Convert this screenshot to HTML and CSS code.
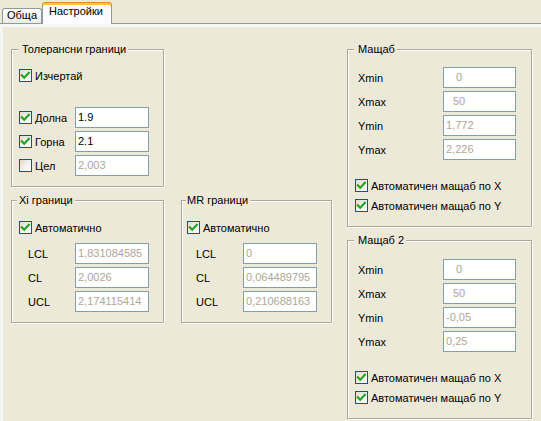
FILE: index.html
```html
<!DOCTYPE html>
<html lang="bg">
<head>
<meta charset="utf-8">
<title>Настройки</title>
<link rel="stylesheet" href="styles.css">
</head>
<body>
<div class="window">
  <div class="tabs">
    <div class="tab">Обща</div>
    <div class="tab tab-active">Настройки</div>
  </div>
  <div class="panel">
    <div class="col-left">
      <div class="group g-tol">
        <span class="group-title t-wide">Толерансни граници</span>
        <div class="row">
          <span class="cb"><svg viewBox="0 0 13 13"><path d="M2.8 6.2 5.2 8.7 9.9 3.8"/></svg></span><span class="cb-text">Изчертай</span>
        </div>
        <div class="row mt21">
          <div class="lead"><span class="cb"><svg viewBox="0 0 13 13"><path d="M2.8 6.2 5.2 8.7 9.9 3.8"/></svg></span><span class="cb-text">Долна</span></div>
          <div class="tb tb-on">1.9</div>
        </div>
        <div class="row">
          <div class="lead"><span class="cb"><svg viewBox="0 0 13 13"><path d="M2.8 6.2 5.2 8.7 9.9 3.8"/></svg></span><span class="cb-text">Горна</span></div>
          <div class="tb tb-on">2.1</div>
        </div>
        <div class="row">
          <div class="lead"><span class="cb"></span><span class="cb-text">Цел</span></div>
          <div class="tb">2,003</div>
        </div>
      </div>
      <div class="group-row">
        <div class="group g-xi">
          <span class="group-title">Xi граници</span>
          <div class="row">
            <span class="cb"><svg viewBox="0 0 13 13"><path d="M2.8 6.2 5.2 8.7 9.9 3.8"/></svg></span><span class="cb-text">Автоматично</span>
          </div>
          <div class="row mt5">
            <div class="lead lead-label">LCL</div>
            <div class="tb">1,831084585</div>
          </div>
          <div class="row">
            <div class="lead lead-label">CL</div>
            <div class="tb">2,0026</div>
          </div>
          <div class="row">
            <div class="lead lead-label">UCL</div>
            <div class="tb">2,174115414</div>
          </div>
        </div>
        <div class="group g-mr">
          <span class="group-title t-mr">MR граници</span>
          <div class="row">
            <span class="cb"><svg viewBox="0 0 13 13"><path d="M2.8 6.2 5.2 8.7 9.9 3.8"/></svg></span><span class="cb-text">Автоматично</span>
          </div>
          <div class="row mt5">
            <div class="lead lead-label">LCL</div>
            <div class="tb">0</div>
          </div>
          <div class="row">
            <div class="lead lead-label">CL</div>
            <div class="tb">0,064489795</div>
          </div>
          <div class="row">
            <div class="lead lead-label">UCL</div>
            <div class="tb">0,210688163</div>
          </div>
        </div>
      </div>
    </div>
    <div class="col-right">
      <div class="group g-scale">
        <span class="group-title t-wide">Мащаб</span>
        <div class="row">
          <div class="lead lead-scale">Xmin</div>
          <div class="tb tb-scale tb-ind1">0</div>
        </div>
        <div class="row">
          <div class="lead lead-scale">Xmax</div>
          <div class="tb tb-scale tb-ind2">50</div>
        </div>
        <div class="row">
          <div class="lead lead-scale">Ymin</div>
          <div class="tb tb-scale">1,772</div>
        </div>
        <div class="row">
          <div class="lead lead-scale">Ymax</div>
          <div class="tb tb-scale">2,226</div>
        </div>
        <div class="cbrow mt19">
          <span class="cb"><svg viewBox="0 0 13 13"><path d="M2.8 6.2 5.2 8.7 9.9 3.8"/></svg></span><span class="cb-text">Автоматичен мащаб по X</span>
        </div>
        <div class="cbrow mt7">
          <span class="cb"><svg viewBox="0 0 13 13"><path d="M2.8 6.2 5.2 8.7 9.9 3.8"/></svg></span><span class="cb-text">Автоматичен мащаб по Y</span>
        </div>
      </div>
      <div class="group g-scale g-scale2">
        <span class="group-title t-wide">Мащаб 2</span>
        <div class="row">
          <div class="lead lead-scale">Xmin</div>
          <div class="tb tb-scale tb-ind1">0</div>
        </div>
        <div class="row">
          <div class="lead lead-scale">Xmax</div>
          <div class="tb tb-scale tb-ind2">50</div>
        </div>
        <div class="row">
          <div class="lead lead-scale">Ymin</div>
          <div class="tb tb-scale">-0,05</div>
        </div>
        <div class="row">
          <div class="lead lead-scale">Ymax</div>
          <div class="tb tb-scale">0,25</div>
        </div>
        <div class="cbrow mt19">
          <span class="cb"><svg viewBox="0 0 13 13"><path d="M2.8 6.2 5.2 8.7 9.9 3.8"/></svg></span><span class="cb-text">Автоматичен мащаб по X</span>
        </div>
        <div class="cbrow mt7">
          <span class="cb"><svg viewBox="0 0 13 13"><path d="M2.8 6.2 5.2 8.7 9.9 3.8"/></svg></span><span class="cb-text">Автоматичен мащаб по Y</span>
        </div>
      </div>
    </div>
  </div>
</div>
</body>
</html>
```
FILE: styles.css
```css
html, body {
  margin: 0;
  padding: 0;
}
body {
  background: #ECE9D8;
  font-family: "Liberation Sans", Arial, sans-serif;
  font-size: 11px;
  color: #000;
}
.window {
  width: 541px;
  height: 421px;
  overflow: hidden;
  background: #ECE9D8;
}
.tabs {
  height: 23px;
  border-bottom: 1px solid #919B9C;
  display: flex;
  align-items: flex-end;
  padding-left: 2px;
}
.tab {
  box-sizing: border-box;
  width: 40px;
  height: 15px;
  border: 1px solid #919B9C;
  border-bottom: none;
  border-radius: 3px 3px 0 0;
  background: linear-gradient(#FFFFFF, #ECEBE6);
  padding-left: 4px;
  line-height: 13px;
  white-space: nowrap;
}
.tab-active {
  width: 70px;
  height: 22px;
  margin-bottom: -1px;
  border-top: 1px solid #E68B2C;
  box-shadow: inset 0 2px 0 #FFC73C;
  background: #FCFCFE;
  padding-left: 6px;
  padding-top: 2px;
}
.panel {
  height: 397px;
  box-sizing: border-box;
  padding: 25px 0 0 11px;
  display: flex;
  box-shadow: inset 3px 3px 0 #F6F5F0;
}
.col-left {
  width: 321px;
  display: flex;
  flex-direction: column;
}
.col-right {
  margin-left: 15px;
  display: flex;
  flex-direction: column;
}
.group-row {
  display: flex;
  margin-top: 13px;
}
.group {
  position: relative;
  box-sizing: border-box;
  border: 1px solid #ACA899;
  box-shadow: inset 1px 1px 0 #FFFFFF, 1px 1px 0 #FFFFFF;
}
.group-title {
  position: absolute;
  top: -7px;
  left: 5px;
  padding: 0 2px 0 2px;
  background: #ECE9D8;
  line-height: 13px;
  white-space: nowrap;
}
.t-wide {
  left: 6px;
  padding-left: 4px;
}
.t-mr {
  left: 4px;
  padding-left: 1px;
}
.g-tol {
  width: 153px;
  height: 138px;
  padding: 15px 0 0 7px;
}
.g-xi {
  width: 153px;
  height: 123px;
  padding: 16px 0 0 7px;
}
.g-mr {
  width: 151px;
  height: 123px;
  margin-left: 17px;
  padding: 16px 0 0 5px;
}
.g-scale {
  width: 185px;
  height: 178px;
  padding: 17px 0 0 7px;
}
.g-scale2 {
  margin-top: 13px;
  height: 179px;
  padding-top: 18px;
}
.row {
  display: flex;
  align-items: center;
  height: 21px;
}
.row + .row {
  margin-top: 3px;
}
.row.mt21 { margin-top: 21px; }
.row.mt5 { margin-top: 5px; }
.cbrow {
  display: flex;
  align-items: center;
  height: 13px;
  white-space: nowrap;
}
.mt19 { margin-top: 19px; }
.mt7 { margin-top: 7px; }
.lead {
  width: 56px;
  flex: none;
  display: flex;
  align-items: center;
  box-sizing: border-box;
}
.lead-label {
  padding-left: 9px;
}
.lead-scale {
  width: 88px;
  padding-left: 3px;
}
.cb {
  flex: none;
  width: 13px;
  height: 13px;
  box-sizing: border-box;
  border: 1px solid #1C5180;
  background: linear-gradient(135deg, #DCDCD7 0%, #F4F4F0 60%, #FFFFFF 100%);
  position: relative;
}
.cb svg {
  position: absolute;
  left: -1px;
  top: -1px;
  width: 13px;
  height: 13px;
}
.cb svg path {
  fill: none;
  stroke: #21A121;
  stroke-width: 2.1;
  stroke-linecap: square;
  stroke-linejoin: miter;
}
.cb-text {
  margin-left: 3px;
  white-space: nowrap;
}
.tb {
  flex: none;
  width: 74px;
  height: 21px;
  box-sizing: border-box;
  border: 1px solid #7F9DB9;
  background: #FFFFFF;
  padding-left: 2px;
  line-height: 19px;
  color: #ACA899;
  white-space: nowrap;
  overflow: hidden;
}
.tb-on {
  color: #000;
}
.tb-scale {
  width: 73px;
}
.tb-ind1 {
  padding-left: 12px;
}
.tb-ind2 {
  padding-left: 9px;
}
```
